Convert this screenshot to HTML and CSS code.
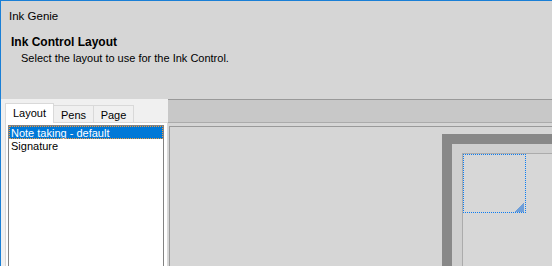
FILE: index.html
```html
<!DOCTYPE html>
<html>
<head>
<meta charset="utf-8">
<link rel="stylesheet" href="styles.css">
</head>
<body>
<div class="window">
  <div class="header">
    <div class="app-title">Ink Genie</div>
    <div class="step-title">Ink Control Layout</div>
    <div class="step-desc">Select the layout to use for the Ink Control.</div>
  </div>
  <div class="main">
    <div class="left">
      <div class="tabs">
        <div class="tab active">Layout</div>
        <div class="tab">Pens</div>
        <div class="tab">Page</div>
      </div>
      <div class="tab-page">
        <div class="listbox">
          <div class="item selected">Note taking - default</div>
          <div class="item">Signature</div>
        </div>
      </div>
    </div>
    <div class="right">
      <div class="toolstrip"></div>
      <div class="canvas">
        <div class="page">
          <div class="page-margin">
            <div class="page-content">
              <div class="ink-box">
                <svg class="focus" width="63" height="59" viewBox="0 0 63 59" shape-rendering="crispEdges">
                  <defs>
                    <pattern id="dh" width="2" height="1" patternUnits="userSpaceOnUse"><rect width="1" height="1" fill="#0a7cf2"/></pattern>
                    <pattern id="dv" width="1" height="2" patternUnits="userSpaceOnUse"><rect width="1" height="1" fill="#0a7cf2"/></pattern>
                  </defs>
                  <rect x="0" y="0" width="63" height="1" fill="url(#dh)"/>
                  <rect x="0" y="58" width="63" height="1" fill="url(#dh)"/>
                  <rect x="0" y="0" width="1" height="59" fill="url(#dv)"/>
                  <rect x="62" y="0" width="1" height="59" fill="url(#dv)"/>
                </svg>
                <svg class="grip" width="10" height="9" viewBox="0 0 10 9" shape-rendering="crispEdges">
                  <path d="M10 0V9H0Z" fill="#6f9fd9"/>
                </svg>
              </div>
            </div>
          </div>
        </div>
      </div>
    </div>
  </div>
</div>
</body>
</html>
```
FILE: styles.css
```css
* { box-sizing: border-box; }
html, body { margin: 0; padding: 0; }
body {
  width: 552px;
  height: 266px;
  overflow: hidden;
  background: #d6d6d6;
  font-family: "Liberation Sans", Arial, sans-serif;
  font-size: 11px;
  color: #000;
}
.window {
  height: 266px;
  border-left: 1px solid #1a7fd6;
  border-top: 1px solid #1a7fd6;
  display: flex;
  flex-direction: column;
}
.header {
  height: 98px;
  flex: none;
  padding: 7px 0 0 8px;
  line-height: 16px;
}
.app-title { font-size: 11.5px; }
.step-title { margin-top: 10px; margin-left: 2px; font-weight: bold; font-size: 12px; }
.step-desc { margin-left: 12px; }
.main {
  flex: 1;
  display: flex;
  min-height: 0;
}
.left {
  width: 167px;
  flex: none;
  background: #f0f0f0;
  padding: 4px 0 0 4px;
  display: flex;
  flex-direction: column;
}
.tabs {
  display: flex;
  align-items: flex-end;
  height: 19px;
  flex: none;
  position: relative;
  z-index: 1;
}
.tab {
  height: 17px;
  padding: 0 4px;
  border: 1px solid #d9d9d9;
  border-bottom: none;
  background: #f0f0f0;
  line-height: 18px;
  margin-left: -1px;
  width: 41px;
  text-align: center;
}
.tab.active {
  height: 20px;
  margin-left: 0;
  margin-bottom: -1px;
  width: 49px;
  background: #fff;
  line-height: 18px;
}
.tab-page {
  flex: 1;
  width: 163px;
  background: #fff;
  border: 1px solid #d9d9d9;
  border-bottom: none;
  padding: 2px 3px 0 2px;
}
.listbox {
  height: 100%;
  border: 1px solid #828282;
  border-bottom: none;
  background: #fff;
}
.item {
  height: 13px;
  line-height: 13px;
  padding: 1px 0 0 2px;
  white-space: nowrap;
  overflow: hidden;
}
.item.selected {
  background: #0078d7;
  color: #fff;
  outline: 1px dotted #f39a3c;
  outline-offset: -1px;
}
.right {
  flex: 1;
  display: flex;
  flex-direction: column;
  min-width: 0;
}
.toolstrip {
  height: 24px;
  flex: none;
  border-top: 1px solid #999;
  border-bottom: 1px solid #ababab;
  background: #c8c8c8;
  margin-bottom: 3px;
}
.canvas {
  flex: 1;
  position: relative;
  overflow: hidden;
  border-top: 1px solid #9a9a9a;
  border-left: 1px solid #9a9a9a;
  margin-left: 1px;
}
.page {
  position: absolute;
  left: 272px;
  top: 7px;
  width: 400px;
  height: 400px;
  border-top: 10px solid #888;
  border-left: 10px solid #888;
}
.page-margin {
  height: 100%;
  border-top: 9px solid #cfcfcf;
  border-left: 10px solid #cfcfcf;
}
.page-content {
  height: 100%;
  border-top: 1px solid #ababab;
  border-left: 1px solid #ababab;
  background: #d7d7d7;
}
.ink-box {
  position: relative;
  width: 63px;
  height: 59px;
}
.focus {
  position: absolute;
  left: 0;
  top: 0;
  display: block;
}
.grip {
  position: absolute;
  right: 2px;
  bottom: 1px;
  display: block;
}
```
